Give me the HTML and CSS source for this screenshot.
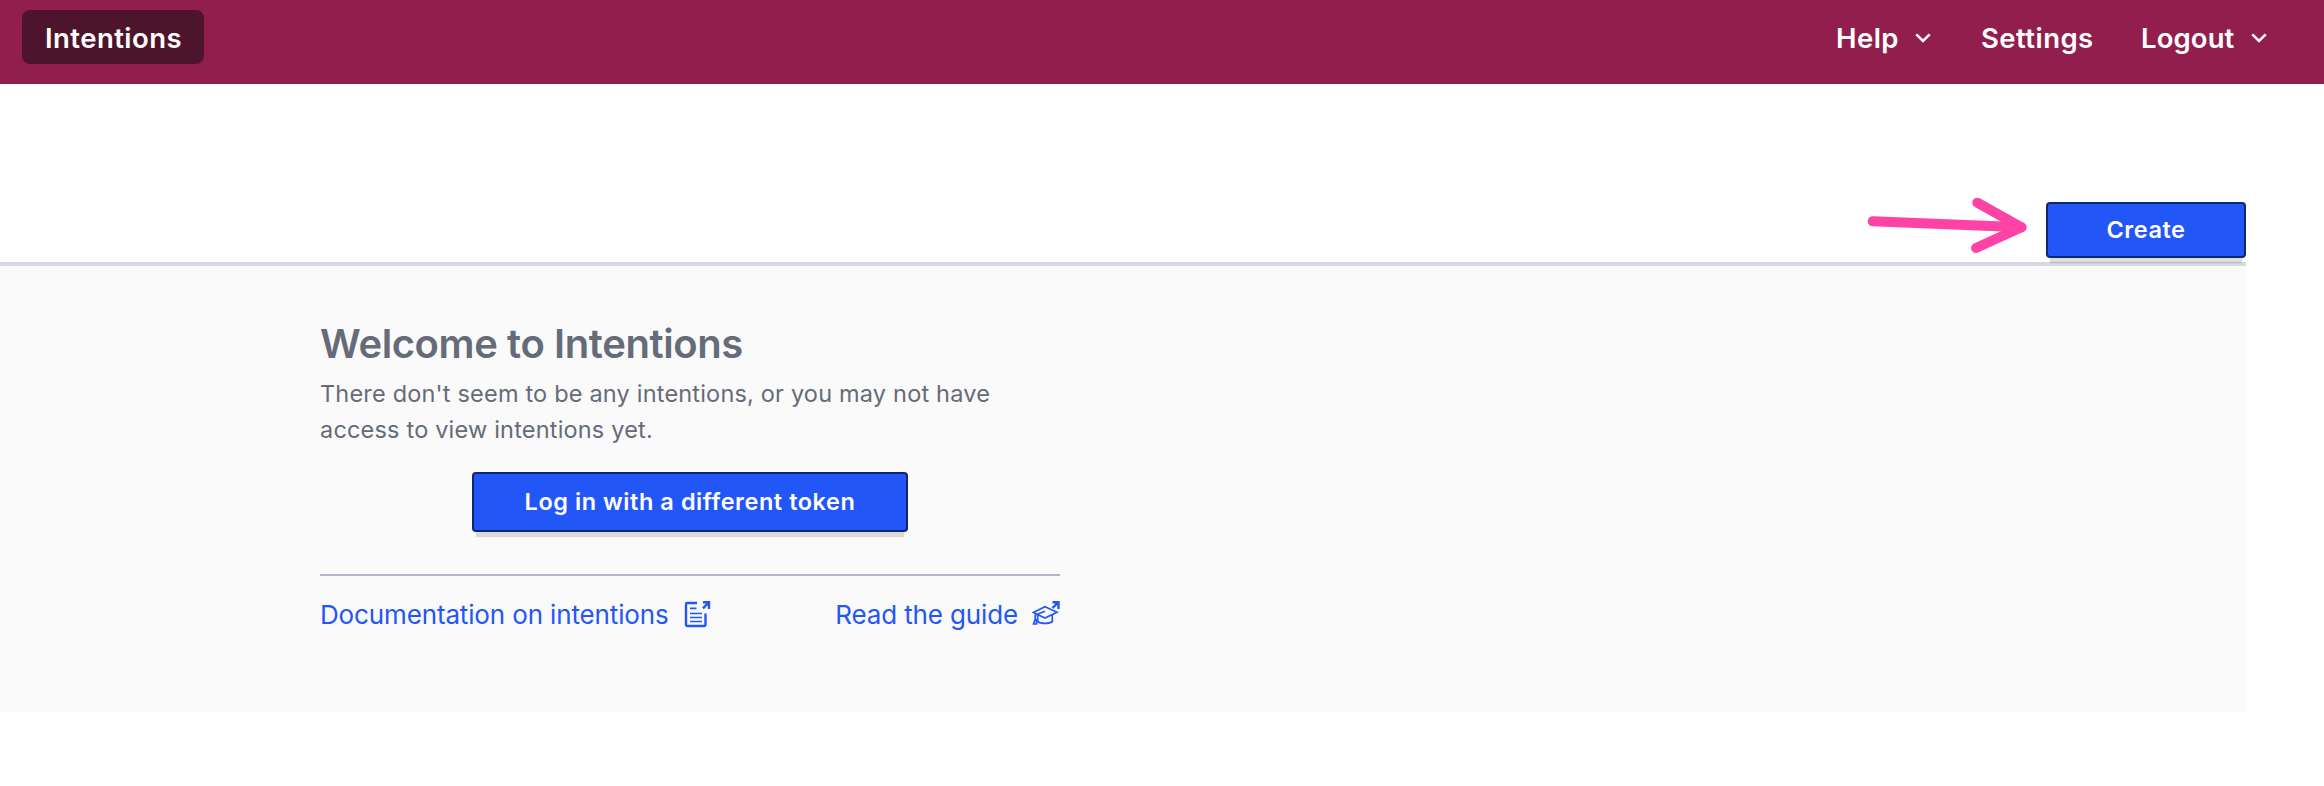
FILE: index.html
```html
<!DOCTYPE html>
<html lang="en">
<head>
<meta charset="utf-8">
<title>Intentions</title>
<link rel="stylesheet" href="styles.css">
</head>
<body>
<header class="navbar">
  <a class="nav-link nav-link-active">Intentions</a>
  <nav class="nav-menu">
    <a class="nav-link nav-help">Help <svg class="chevron" viewBox="0 0 16 10"><path d="M1.3 1.3 8 8 14.7 1.3"/></svg></a>
    <a class="nav-link nav-settings">Settings</a>
    <a class="nav-link nav-logout">Logout <svg class="chevron" viewBox="0 0 16 10"><path d="M1.3 1.3 8 8 14.7 1.3"/></svg></a>
  </nav>
</header>
<main class="page">
  <div class="toolbar">
    <svg class="arrow" viewBox="0 0 160 56"><path d="M5.700 23.300 L154.500 29.300"/><path d="M110.300 4.700 L154.500 29.300 L109 50"/></svg>
    <button class="button button-create">Create</button>
  </div>
  <section class="empty">
    <div class="empty-body">
      <h1 class="title">Welcome to Intentions</h1>
      <p class="message">There don't seem to be any intentions, or you may not have<br>access to view intentions yet.</p>
      <button class="button button-login">Log in with a different token</button>
      <div class="links">
        <a class="link link-docs">Documentation on intentions
          <svg class="icon" viewBox="0 0 28 28"><path class="bold" d="M14 3H4.200Q3 3 3 4.200V24.800Q3 26 4.200 26H21.300Q22.500 26 22.500 24.800V13.500"/><path class="thin" d="M7 8.300h6.500M7 13.500h12M7 17.500h12M7 21.500h12"/><path class="bold" d="M20 2.200h6V9M26 2.200 20 8.300"/></svg></a>
        <a class="link link-guide">Read the guide
          <svg class="icon" viewBox="0 0 28 28"><path class="thin" d="M1.300 12.500 13 6.700 25 12.200 13 18ZM5.700 15V21.500C8.500 24 17.500 24 20.300 21.500V14.500M13 11.300 3.200 15V20M3.200 19 1.500 24H4.500V19"/><path class="bold" d="M20.500 2.200h6V9M26.500 2.200 20.500 8"/></svg></a>
      </div>
    </div>
  </section>
</main>
</body>
</html>
```
FILE: styles.css
```css
* { box-sizing: border-box; }
body {
  margin: 0;
  background: #fff;
  font-family: Inter, "Liberation Sans", sans-serif;
}
.navbar {
  display: flex;
  justify-content: space-between;
  height: 84px;
  padding: 10px 57px 0 22px;
  background: #911e4d;
}
.nav-link {
  display: flex;
  align-items: center;
  justify-content: space-between;
  height: 54px;
  padding-top: 2px;
  color: #fff;
  font-size: 27.5px;
  font-weight: 560;
  letter-spacing: 0.45px;
  white-space: nowrap;
}
.nav-link-active {
  width: 182px;
  padding-left: 23px;
  border-radius: 8px;
  background: #4d142b;
}
.nav-menu { display: flex; gap: 48px; }
.nav-help { width: 95px; margin-right: 2px; }
.nav-settings { width: 112px; }
.nav-logout { width: 126px; letter-spacing: 0.1px; }
.chevron {
  width: 16px;
  height: 10px;
  fill: none;
  stroke: #fff;
  stroke-width: 2.6;
}
.page { width: 2246px; }
.toolbar {
  display: flex;
  justify-content: flex-end;
  align-items: flex-start;
  gap: 19px;
  height: 182px;
  padding-top: 114px;
  border-bottom: 4px solid #d5dae1;
}
.arrow {
  width: 160px;
  height: 56px;
  fill: none;
  stroke: #ff42a5;
  stroke-width: 10;
  stroke-linecap: round;
  stroke-linejoin: round;
}
.button {
  padding: 0 0 2px;
  border: 2px solid #10266f;
  border-radius: 4px;
  background: #2356f6;
  box-shadow: 0 9px 1px -4px rgba(0, 0, 0, 0.13);
  color: #fff;
  font: 560 23.5px Inter, "Liberation Sans", sans-serif;
  letter-spacing: 0.55px;
}
.button-create { width: 200px; height: 56px; margin-top: 4px; }
.empty {
  height: 446px;
  padding: 54px 0 0 320px;
  background: #fafafa;
}
.empty-body { display: flex; flex-direction: column; width: 740px; }
.title {
  margin: 0;
  color: #656b78;
  font-size: 40px;
  font-weight: 600;
  letter-spacing: -0.4px;
  line-height: 48px;
}
.message {
  margin: 8px 0 0;
  color: #656b78;
  font-size: 23.5px;
  letter-spacing: 0.19px;
  line-height: 36px;
  white-space: nowrap;
}
.button-login { width: 436px; height: 60px; margin: 24px 0 42px 152px; }
.links {
  display: flex;
  justify-content: space-between;
  padding-top: 20px;
  border-top: 2px solid #b0b5c7;
}
.link {
  display: flex;
  align-items: center;
  height: 36px;
  color: #2356f6;
  font-size: 26px;
  letter-spacing: -0.14px;
  white-space: nowrap;
}
.icon {
  width: 28px;
  height: 28px;
  margin: -1px 0 0 14px;
  fill: none;
  stroke: #2356f6;
}
.thin { stroke-width: 1.7; }
.bold { stroke-width: 2.4; }
```
